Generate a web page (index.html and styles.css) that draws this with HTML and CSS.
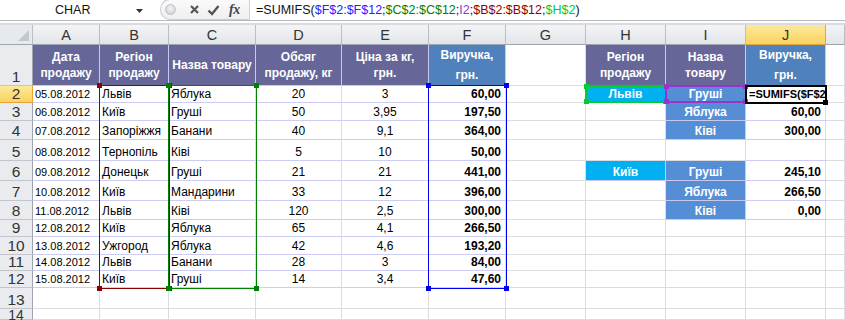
FILE: index.html
```html
<!DOCTYPE html>
<html>
<head>
<meta charset="utf-8">
<link rel="stylesheet" href="styles.css">
</head>
<body>
<div class="fbar">
  <div class="namebox"><span class="nm">CHAR</span><svg class="tri" width="7" height="4" viewBox="0 0 7 4"><path d="M0 0H7L3.5 4Z" fill="#333"/></svg></div>
  <div class="fbtns">
    <span class="dot"></span>
    <svg class="ico" width="11" height="11" viewBox="0 0 11 11"><path d="M2 2L9 9M9 2L2 9" stroke="#555" stroke-width="2.2"/></svg>
    <svg class="ico" width="13" height="12" viewBox="0 0 13 12"><path d="M1.5 6.5L5 10L11.5 2" stroke="#555" stroke-width="2.4" fill="none"/></svg>
    <span class="fx">fx</span>
  </div>
  <div class="formula">=SUMIFS(<span class="rb">$F$2:$F$12</span>;<span class="rg">$C$2:$C$12</span>;<span class="rp">I2</span>;<span class="rr">$B$2:$B$12</span>;<span class="rl">$H$2</span>)</div>
</div>
<div class="gap"></div>
<div class="sheet">
  <div class="corner"><span class="ctri"></span></div>
  <div class="ch">A</div><div class="ch">B</div><div class="ch">C</div><div class="ch">D</div><div class="ch">E</div><div class="ch">F</div><div class="ch">G</div><div class="ch">H</div><div class="ch">I</div><div class="ch sel">J</div><div class="ch"></div>

  <div class="rh">1</div>
  <div class="c hd pu">Дата<br>продажу</div><div class="c hd pu">Регіон<br>продажу</div><div class="c hd pu">Назва товару</div><div class="c hd pu">Обсяг<br>продажу, кг</div><div class="c hd pu">Ціна за кг,<br>грн.</div><div class="c hd bl tall">Виручка,<br>грн.</div>
  <div class="c"></div><div class="c hd pu">Регіон<br>продажу</div><div class="c hd pu">Назва<br>товару</div><div class="c hd bl tall">Виручка,<br>грн.</div><div class="c"></div>

  <div class="rh sel">2</div>
  <div class="c t dt">05.08.2012</div><div class="c t">Львів</div><div class="c t">Яблука</div><div class="c t ct">20</div><div class="c t ct">3</div><div class="c t rt b">60,00</div>
  <div class="c"></div><div class="c cy">Львів</div><div class="c lb">Груші</div><div class="c t act">=SUMIFS($F$2</div><div class="c"></div>

  <div class="rh">3</div>
  <div class="c t dt">06.08.2012</div><div class="c t">Київ</div><div class="c t">Груші</div><div class="c t ct">50</div><div class="c t ct">3,95</div><div class="c t rt b">197,50</div>
  <div class="c"></div><div class="c"></div><div class="c lb">Яблука</div><div class="c t rt b">60,00</div><div class="c"></div>

  <div class="rh">4</div>
  <div class="c t dt">07.08.2012</div><div class="c t">Запоріжжя</div><div class="c t">Банани</div><div class="c t ct">40</div><div class="c t ct">9,1</div><div class="c t rt b">364,00</div>
  <div class="c"></div><div class="c"></div><div class="c lb">Ківі</div><div class="c t rt b">300,00</div><div class="c"></div>

  <div class="rh">5</div>
  <div class="c t dt">08.08.2012</div><div class="c t">Тернопіль</div><div class="c t">Ківі</div><div class="c t ct">5</div><div class="c t ct">10</div><div class="c t rt b">50,00</div>
  <div class="c"></div><div class="c"></div><div class="c"></div><div class="c t"></div><div class="c"></div>

  <div class="rh">6</div>
  <div class="c t dt">09.08.2012</div><div class="c t">Донецьк</div><div class="c t">Груші</div><div class="c t ct">21</div><div class="c t ct">21</div><div class="c t rt b">441,00</div>
  <div class="c"></div><div class="c cy">Київ</div><div class="c lb">Груші</div><div class="c t rt b">245,10</div><div class="c"></div>

  <div class="rh">7</div>
  <div class="c t dt">10.08.2012</div><div class="c t">Київ</div><div class="c t">Мандарини</div><div class="c t ct">33</div><div class="c t ct">12</div><div class="c t rt b">396,00</div>
  <div class="c"></div><div class="c"></div><div class="c lb">Яблука</div><div class="c t rt b">266,50</div><div class="c"></div>

  <div class="rh">8</div>
  <div class="c t dt">11.08.2012</div><div class="c t">Львів</div><div class="c t">Ківі</div><div class="c t ct">120</div><div class="c t ct">2,5</div><div class="c t rt b">300,00</div>
  <div class="c"></div><div class="c"></div><div class="c lb">Ківі</div><div class="c t rt b">0,00</div><div class="c"></div>

  <div class="rh">9</div>
  <div class="c t dt">12.08.2012</div><div class="c t">Київ</div><div class="c t">Яблука</div><div class="c t ct">65</div><div class="c t ct">4,1</div><div class="c t rt b">266,50</div>
  <div class="c"></div><div class="c"></div><div class="c"></div><div class="c"></div><div class="c"></div>

  <div class="rh">10</div>
  <div class="c t dt">13.08.2012</div><div class="c t">Ужгород</div><div class="c t">Яблука</div><div class="c t ct">42</div><div class="c t ct">4,6</div><div class="c t rt b">193,20</div>
  <div class="c"></div><div class="c"></div><div class="c"></div><div class="c"></div><div class="c"></div>

  <div class="rh">11</div>
  <div class="c t dt">14.08.2012</div><div class="c t">Львів</div><div class="c t">Банани</div><div class="c t ct">28</div><div class="c t ct">3</div><div class="c t rt b">84,00</div>
  <div class="c"></div><div class="c"></div><div class="c"></div><div class="c"></div><div class="c"></div>

  <div class="rh">12</div>
  <div class="c t dt">15.08.2012</div><div class="c t">Київ</div><div class="c t">Груші</div><div class="c t ct">14</div><div class="c t ct">3,4</div><div class="c t rt b">47,60</div>
  <div class="c"></div><div class="c"></div><div class="c"></div><div class="c"></div><div class="c"></div>

  <div class="rh">13</div>
  <div class="c"></div><div class="c"></div><div class="c"></div><div class="c"></div><div class="c"></div><div class="c"></div><div class="c"></div><div class="c"></div><div class="c"></div><div class="c"></div><div class="c"></div>

  <div class="rh last">14</div>
  <div class="c"></div><div class="c"></div><div class="c"></div><div class="c"></div><div class="c"></div><div class="c"></div><div class="c"></div><div class="c"></div><div class="c"></div><div class="c"></div><div class="c"></div>

  <div class="hl hl-b"><i class="k tl"></i><i class="k tr"></i><i class="k bl2"></i><i class="k br"></i></div>
  <div class="hl hl-c"><i class="k tl"></i><i class="k tr"></i><i class="k bl2"></i><i class="k br"></i></div>
  <div class="hl hl-f"><i class="k tl"></i><i class="k tr"></i><i class="k bl2"></i><i class="k br"></i></div>
  <div class="hl hl-h"><i class="k tl"></i><i class="k tr"></i><i class="k bl2"></i><i class="k br"></i></div>
  <div class="hl hl-i"><i class="k tl"></i><i class="k tr"></i><i class="k bl2"></i><i class="k br"></i></div>
  <div class="hl hl-j"><i class="k br"></i></div>
</div>
</body>
</html>
```
FILE: styles.css
```css
* { box-sizing: border-box; }
body {
  margin: 0;
  width: 845px;
  height: 320px;
  overflow: hidden;
  background: #fff;
  font-family: "Liberation Sans", Arial, sans-serif;
}
.fbar {
  display: flex;
  height: 21px;
  border-bottom: 1px solid #b8bcc2;
  background: #fff;
}
.namebox {
  width: 156px;
  display: flex;
  align-items: center;
}
.nm {
  font-size: 12.5px;
  color: #111;
  margin-left: 55px;
}
.tri { margin-left: 46px; margin-top: 1px; }
.fbtns {
  width: 90px;
  display: flex;
  align-items: center;
  border: 1px solid #c9ccd1;
  border-right: 1px solid #d4d4d4;
  border-radius: 10px 0 0 10px;
  margin: -1px 0 0 4px;
  height: 21px;
  padding-left: 4px;
  background: linear-gradient(#fafafa, #eeeff1);
}
.dot {
  width: 11px;
  height: 11px;
  border-radius: 50%;
  background: radial-gradient(circle at 50% 40%, #f4f4f4 0, #d9dadc 60%, #bfc1c4 100%);
  border: 1px solid #c0c2c5;
  margin-right: 13px;
}
.ico { margin-right: 7px; }
.fx {
  font-family: "Liberation Serif", serif;
  font-style: italic;
  font-weight: bold;
  font-size: 14px;
  color: #444;
  margin-left: 2px;
  letter-spacing: -0.5px;
}
.formula {
  flex: 1;
  font-size: 12.5px;
  color: #111;
  padding-left: 6px;
  display: flex;
  align-items: center;
  white-space: nowrap;
}
.rb { color: #2222ff; }
.rg { color: #008000; }
.rp { color: #9933cc; }
.rr { color: #8b0000; }
.rl { color: #00cc33; }
.gap {
  height: 4px;
  border-bottom: 2px solid #d9dbde;
}
.sheet {
  position: relative;
  display: grid;
  grid-template-columns: 33px 67px 69px 87px 86px 87px 77px 80px 80px 80px 80px 19px;
  grid-template-rows: 20px 41px 17px 18px 19px 21px 20px 20px 19px 17px 18px 16px 17px 21px 11px;
  width: 845px;
  overflow: hidden;
}
.corner {
  background: #e6e9ed;
  border-right: 1px solid #b9bec6;
  border-bottom: 1px solid #9ea5ae;
  position: relative;
}
.ctri {
  position: absolute;
  right: 3px;
  bottom: 3px;
  width: 0;
  height: 0;
  border-left: 11px solid transparent;
  border-bottom: 11px solid #c4c8cd;
}
.ch {
  background: linear-gradient(#f3f4f6, #e2e5e9);
  border-right: 1px solid #b9bec6;
  border-bottom: 1px solid #9ea5ae;
  font-size: 14.5px;
  color: #333;
  display: flex;
  align-items: center;
  justify-content: center;
  padding-top: 1px;
}
.ch.sel, .rh.sel {
  background: linear-gradient(#fde89a, #f9d35f);
  border-right-color: #e2a53c;
  border-bottom-color: #e2a53c;
}
.rh {
  background: #e9ebee;
  border-right: 1px solid #9ea5ae;
  border-bottom: 1px solid #c2c6cc;
  font-size: 15.5px;
  color: #333;
  display: flex;
  align-items: flex-end;
  justify-content: center;
  line-height: 14px;
  padding-bottom: 1px;
}
.rh.last {
  align-items: flex-start;
  padding-top: 2px;
  font-size: 14px;
  line-height: 9px;
}
.c {
  border-right: 1px solid #dadcdf;
  border-bottom: 1px solid #dadcdf;
  font-size: 12px;
  color: #000;
  display: flex;
  align-items: flex-end;
  padding: 0 2px 1px 2px;
  white-space: nowrap;
  overflow: hidden;
  line-height: 14px;
}
.c.t { border-bottom-color: #ccccf5; }
.dt { font-size: 11px; }
.ct { justify-content: center; }
.rt { justify-content: flex-end; padding-right: 4px; }
.b { font-weight: bold; }
.hd {
  color: #fff;
  font-weight: bold;
  text-align: center;
  justify-content: center;
  align-items: center;
  line-height: 16px;
  border-right-color: #c8c8f0;
  border-bottom-color: #c8c8f0;
  padding: 0 1px 0 1px;
}
.hd.tall { line-height: 20px; }
.pu { background: #666699; }
.bl { background: #4f81bd; border-right-color: #c8c8f0; }
.cy {
  background: #00b0f0;
  color: #fff;
  font-weight: bold;
  justify-content: center;
  border-right-color: #c8c8f0;
  border-bottom-color: #c8c8f0;
}
.lb {
  background: #558ed5;
  color: #fff;
  font-weight: bold;
  justify-content: center;
  border-right-color: #c8c8f0;
  border-bottom-color: #c8c8f0;
}
.act {
  font-weight: bold;
  font-size: 11px;
  padding-left: 3px;
  padding-right: 0;
}
.hl {
  position: absolute;
  border: 1px solid;
  pointer-events: none;
}
.hl-b { left: 99px; top: 60px; width: 71px; height: 204px; border-color: #8b0000; }
.hl-b .k { background: #8b0000; }
.hl-c { left: 168px; top: 60px; width: 89px; height: 204px; border-color: #008000; }
.hl-c .k { background: #008000; }
.hl-f { left: 428px; top: 60px; width: 79px; height: 204px; border-color: #0000ee; }
.hl-f .k { background: #0000ee; }
.hl-h { left: 585px; top: 60px; width: 82px; height: 18px; border: 2px solid #00cc33; }
.hl-h .k { background: #00cc33; }
.hl-i { left: 665px; top: 60px; width: 82px; height: 18px; border: 2px solid #9933cc; }
.hl-i .k { background: #9933cc; }
.hl-j { left: 745px; top: 60px; width: 82px; height: 19px; border: 2px solid #000; }
.hl-j .k { background: #000; }
.k {
  position: absolute;
  width: 5px;
  height: 5px;
}
.k.tl { left: -3px; top: -3px; }
.k.tr { right: -3px; top: -3px; }
.k.bl2 { left: -3px; bottom: -3px; }
.k.br { right: -3px; bottom: -3px; }
```
